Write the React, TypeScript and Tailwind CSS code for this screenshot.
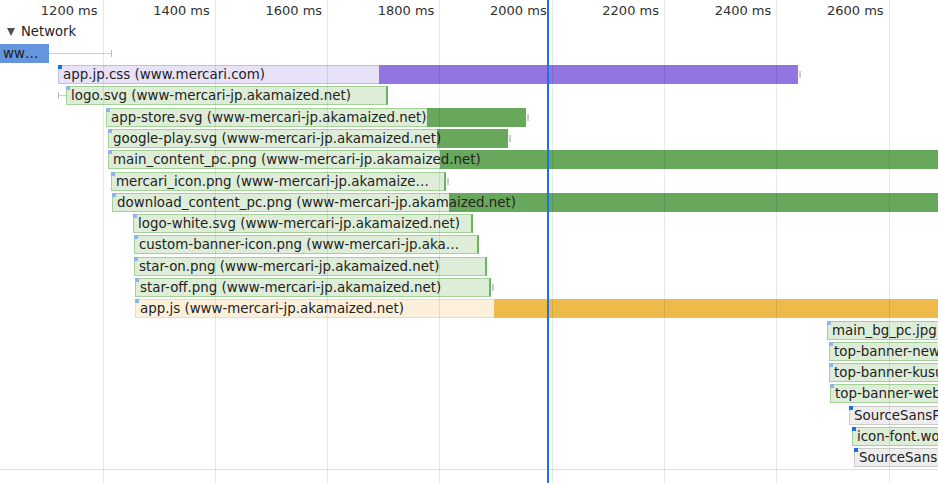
type Kind = 'css' | 'img' | 'script' | 'font';

type Req = {
  name: string;
  kind: Kind;
  start: number;
  lightEnd: number;
  darkEnd?: number;
  lead?: number;
  tail?: boolean;
  hot?: boolean;
};

// px positions read off the timeline (0.5615 px per ms)
const requests: Req[] = [
  { name: 'app.jp.css (www.mercari.com)', kind: 'css', start: 58, lightEnd: 379, darkEnd: 798, tail: true, hot: true },
  { name: 'logo.svg (www-mercari-jp.akamaized.net)', kind: 'img', lead: 58, start: 66, lightEnd: 388 },
  { name: 'app-store.svg (www-mercari-jp.akamaized.net)', kind: 'img', start: 106, lightEnd: 427, darkEnd: 526, tail: true },
  { name: 'google-play.svg (www-mercari-jp.akamaized.net)', kind: 'img', start: 108, lightEnd: 437, darkEnd: 508, tail: true },
  { name: 'main_content_pc.png (www-mercari-jp.akamaized.net)', kind: 'img', start: 108, lightEnd: 440, darkEnd: 1000 },
  { name: 'mercari_icon.png (www-mercari-jp.akamaized.net)', kind: 'img', start: 111, lightEnd: 446, tail: true },
  { name: 'download_content_pc.png (www-mercari-jp.akamaized.net)', kind: 'img', start: 112, lightEnd: 449, darkEnd: 1000 },
  { name: 'logo-white.svg (www-mercari-jp.akamaized.net)', kind: 'img', start: 133, lightEnd: 473 },
  { name: 'custom-banner-icon.png (www-mercari-jp.akamaized.net)', kind: 'img', start: 134, lightEnd: 479 },
  { name: 'star-on.png (www-mercari-jp.akamaized.net)', kind: 'img', start: 134, lightEnd: 487 },
  { name: 'star-off.png (www-mercari-jp.akamaized.net)', kind: 'img', start: 135, lightEnd: 491, tail: true },
  { name: 'app.js (www-mercari-jp.akamaized.net)', kind: 'script', start: 135, lightEnd: 494, darkEnd: 1000 },
  { name: 'main_bg_pc.jpg (www-mercari-jp.akamaized.net)', kind: 'img', start: 827, lightEnd: 1000 },
  { name: 'top-banner-new.png (www-mercari-jp.akamaized.net)', kind: 'img', start: 829, lightEnd: 1000 },
  { name: 'top-banner-kusuri.png (www-mercari-jp.akamaized.net)', kind: 'img', start: 829, lightEnd: 1000 },
  { name: 'top-banner-web.png (www-mercari-jp.akamaized.net)', kind: 'img', start: 830, lightEnd: 1000 },
  { name: 'SourceSansPro-Regular.woff2 (www-mercari-jp.akamaized.net)', kind: 'font', start: 849, lightEnd: 1000, hot: true },
  { name: 'icon-font.woff (www-mercari-jp.akamaized.net)', kind: 'img', start: 852, lightEnd: 1000, hot: true },
  { name: 'SourceSansPro-Bold.woff2 (www-mercari-jp.akamaized.net)', kind: 'font', start: 854, lightEnd: 1000, hot: true },
];

const palette: Record<Kind, { light: string; dark: string; edge: string }> = {
  css: { light: 'bg-[#e8e2f8] border-[#c7b8f1]', dark: 'bg-[#9275e1]', edge: 'border-r-[#9275e1]' },
  img: { light: 'bg-[#deedd8] border-[#a3d197]', dark: 'bg-[#68a85c]', edge: 'border-r-[#6cb35f]' },
  script: { light: 'bg-[#fdf0da] border-[#f6dca6]', dark: 'bg-[#eeba4a]', edge: 'border-r-[#eeba4a]' },
  font: { light: 'bg-[#ededed] border-[#cbcbcb]', dark: 'bg-[#b5b5b5]', edge: 'border-r-[#b5b5b5]' },
};

const ticks = ['1400 ms', '1600 ms', '1800 ms', '2000 ms', '2200 ms', '2400 ms', '2600 ms'];

function Row({ r }: { r: Req }) {
  const c = palette[r.kind];
  const full = (r.darkEnd ?? r.lightEnd) - r.start;
  return (
    <div className="flex h-[21.3px] items-center">
      {r.lead !== undefined && (
        <div className="flex h-[7px] shrink-0 items-center" style={{ marginLeft: r.lead, width: r.start - r.lead }}>
          <div className="h-full w-px bg-[#bdbdbd]" />
          <div className="h-px flex-1 bg-[#cfcfcf]" />
        </div>
      )}
      <div
        className="relative flex h-[19px] shrink-0"
        style={{ marginLeft: r.lead !== undefined ? 0 : r.start, width: full }}
      >
        <div
          className={`h-full border ${c.light} ${r.darkEnd ? 'border-r-0' : `border-r-2 ${c.edge}`}`}
          style={{ width: r.lightEnd - r.start }}
        />
        {r.darkEnd && <div className={`h-full flex-1 ${c.dark}`} />}
        <span className={`absolute left-0 top-0 size-1 ${r.hot ? 'bg-[#1a6fe6]' : 'bg-[#8db6e6]'}`} />
        <span className="absolute inset-0 truncate pl-[5px] pr-[9px] text-[13.4px] leading-[19px] text-[#222]">
          {r.name}
        </span>
      </div>
      {r.tail && <div className="ml-px h-[7px] w-[2px] shrink-0 bg-[#cccccc]" />}
    </div>
  );
}

export default function App() {
  return (
    <div className="relative h-[483px] w-[938px] overflow-hidden bg-white font-['DejaVu_Sans',sans-serif] text-[13px] text-[#222]">
      {/* time ruler */}
      <div className="flex h-[21.3px] leading-[21.3px] text-[#303030]">
        <div className="w-[103.5px] shrink-0 pr-[6px] text-right">1200 ms</div>
        {ticks.map((t) => (
          <div key={t} className="w-[112.3px] shrink-0 pr-[6px] text-right">
            {t}
          </div>
        ))}
      </div>

      {/* track header */}
      <div className="flex h-[21.3px] items-center pl-[7px] text-[13.2px]">
        <span className="mr-[6px] h-0 w-0 border-x-[4.5px] border-t-[8px] border-x-transparent border-t-[#505050]" />
        <span>Network</span>
      </div>

      {/* document request */}
      <div className="flex h-[21.3px] items-center">
        <div className="flex h-[19px] w-[49px] shrink-0 items-center bg-[#6596dd] pl-[3px] text-[13.4px] leading-[19px] text-[#1c1c1c]">
          ww…
        </div>
        <div className="h-px w-[62px] bg-[#cfcfcf]" />
        <div className="h-[7px] w-px bg-[#bdbdbd]" />
      </div>

      {requests.map((r) => (
        <Row key={r.name} r={r} />
      ))}

      <div className="h-[15px] border-t border-[#dedede]" />

      {/* grid lines */}
      <div className="pointer-events-none absolute inset-0 flex">
        <div className="h-full w-[103.5px] shrink-0 border-r border-black/[0.09]" />
        {ticks.map((t) => (
          <div key={t} className="h-full w-[112.3px] shrink-0 border-r border-black/[0.09]" />
        ))}
      </div>

      {/* cursor */}
      <div className="pointer-events-none absolute inset-y-0 left-[547px] w-[2px] bg-[#1b74e4]" />
    </div>
  );
}
